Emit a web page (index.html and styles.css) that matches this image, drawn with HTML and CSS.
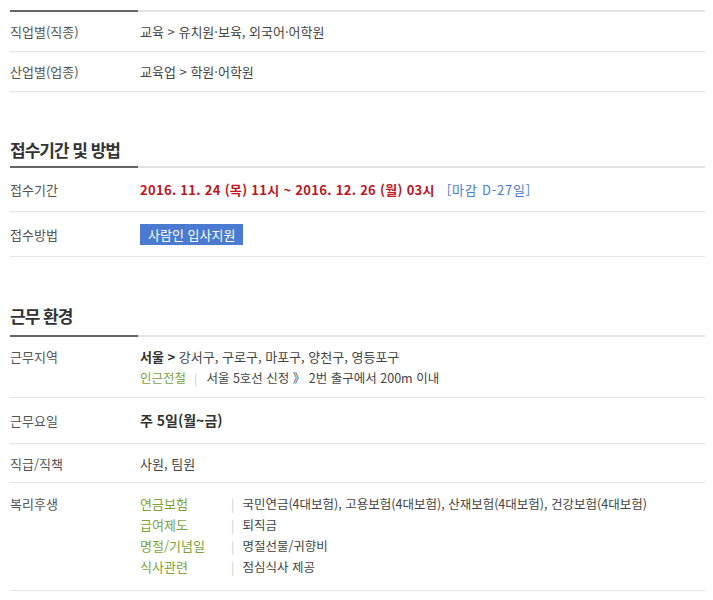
FILE: index.html
```html
<!DOCTYPE html>
<html lang="ko">
<head>
<meta charset="utf-8">
<link rel="stylesheet" href="styles.css">
</head>
<body>
<div class="page">
  <section class="sec sec-first">
    <dl class="tbl">
      <div class="row r1">
        <dt>직업별(직종)</dt>
        <dd>교육 &gt; 유치원·보육, 외국어·어학원</dd>
      </div>
      <div class="row r1">
        <dt>산업별(업종)</dt>
        <dd>교육업 &gt; 학원·어학원</dd>
      </div>
    </dl>
  </section>

  <section class="sec">
    <h2 class="title t1">접수기간 및 방법</h2>
    <dl class="tbl">
      <div class="row r-period">
        <dt>접수기간</dt>
        <dd><span class="date">2016. 11. 24 (목) 11시 ~ 2016. 12. 26 (월) 03시</span><span class="dday">[마감 D-27일]</span></dd>
      </div>
      <div class="row r-method">
        <dt>접수방법</dt>
        <dd><span class="btn">사람인 입사지원</span></dd>
      </div>
    </dl>
  </section>

  <section class="sec">
    <h2 class="title t2">근무 환경</h2>
    <dl class="tbl">
      <div class="row r-area">
        <dt>근무지역</dt>
        <dd>
          <div><strong class="city">서울 &gt;</strong> 강서구, 구로구, 마포구, 양천구, 영등포구</div>
          <div class="subway"><span class="green">인근전철</span><span class="bar">|</span>서울 5호선 신정 》 2번 출구에서 200m 이내</div>
        </dd>
      </div>
      <div class="row r-days">
        <dt>근무요일</dt>
        <dd><strong class="days">주 5일(월~금)</strong></dd>
      </div>
      <div class="row r-rank">
        <dt>직급/직책</dt>
        <dd>사원, 팀원</dd>
      </div>
      <div class="row r-welfare">
        <dt>복리후생</dt>
        <dd>
          <div class="wf"><span class="wf-k">연금보험</span><span class="bar">|</span><span>국민연금(4대보험), 고용보험(4대보험), 산재보험(4대보험), 건강보험(4대보험)</span></div>
          <div class="wf"><span class="wf-k">급여제도</span><span class="bar">|</span><span>퇴직금</span></div>
          <div class="wf"><span class="wf-k">명절/기념일</span><span class="bar">|</span><span>명절선물/귀향비</span></div>
          <div class="wf"><span class="wf-k">식사관련</span><span class="bar">|</span><span>점심식사 제공</span></div>
        </dd>
      </div>
    </dl>
  </section>
</div>
</body>
</html>
```

FILE: styles.css
```css
html, body {
  margin: 0;
  padding: 0;
  background: #fff;
}
body {
  font-family: "Noto Sans CJK KR", "Noto Sans", sans-serif;
  font-size: 13px;
  color: #444;
}
.page {
  padding: 10px 8px 0 10px;
  width: 695px;
}
.title {
  margin: 0;
  font-size: 17px;
  font-weight: bold;
  color: #333;
  line-height: 24px;
  letter-spacing: -1px;
}
.t1 {
  margin-top: 46px;
  padding-bottom: 4px;
}
.t2 {
  margin-top: 47px;
  padding-bottom: 7px;
}
.tbl {
  margin: 0;
  border-top: 2px solid #e3e3e3;
  position: relative;
}
.tbl::before {
  content: "";
  position: absolute;
  left: 0;
  top: -2px;
  width: 128px;
  height: 2px;
  background: #666;
}
.row {
  display: flex;
  border-bottom: 1px solid #e3e3e3;
  line-height: 18px;
}
.row dt {
  width: 130px;
  flex: none;
  color: #555;
}
.row dd {
  margin: 0;
  color: #444;
}
.r1 { padding: 11px 0 10px; }
.r-period { padding: 13px 0 12px; }
.r-method { padding: 12px 0 11px; }
.r-method dt { line-height: 21px; }
.r-area { padding: 9px 0 9px; line-height: 21px; }
.r-days { padding: 12px 0 12px; line-height: 21px; }
.r-rank { padding: 9px 0 8px; line-height: 21px; }
.r-welfare { padding: 10px 0 13px; line-height: 21px; }

.date {
  color: #c0141e;
  font-weight: bold;
  letter-spacing: 0.3px;
}
.dday {
  color: #4a7bd0;
  margin-left: 12px;
  letter-spacing: 0.8px;
}
.btn {
  display: inline-block;
  background: #4a7bd0;
  color: #fff;
  height: 21px;
  line-height: 21px;
  padding: 0 8px;
}
.city {
  color: #333;
}
.days {
  color: #333;
  font-size: 14px;
}
.subway {
  font-size: 12.5px;
}
.green {
  color: #7ba33a;
}
.bar {
  color: #ccc;
  margin: 0 9px 0 8px;
}
.wf {
  display: flex;
  font-size: 12.5px;
}
.wf-k {
  width: 91px;
  color: #7ba33a;
  font-size: 13px;
}
.wf .bar {
  margin: 0 8px 0 0;
}
```
